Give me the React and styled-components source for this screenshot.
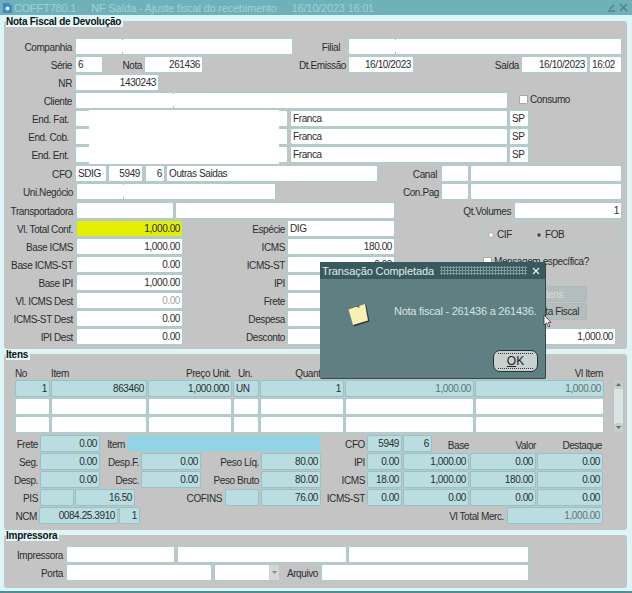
import React from 'react';
import styled, { createGlobalStyle } from 'styled-components';

const Global = createGlobalStyle`
  html, body { margin: 0; padding: 0; background: #dcf5f6; }
  body { font-family: "Liberation Sans", Arial, sans-serif; font-size: 10px; letter-spacing: -0.4px; color: #2a2e2e; }
`;

const Page = styled.div`
  position: relative;
  width: 632px;
  height: 593px;
  overflow: hidden;
  border-bottom: 2px solid #4f8f94;
  box-sizing: border-box;
`;

const TitleBar = styled.div`
  display: flex;
  align-items: center;
  height: 15px;
  padding: 0 4px 0 3px;
  background: #6fb1b9;
  color: #a0d0d5;
  font-size: 11px;
  letter-spacing: -0.2px;
`;
const TitleText = styled.span`
  margin-left: ${p => p.$ml}px;
  white-space: nowrap;
`;
const TitleIcons = styled.div`
  margin-left: auto;
  display: flex;
  align-items: center;
  gap: 3px;
`;

const Section = styled.section`
  position: relative;
  width: 623px;
  height: ${p => p.$h}px;
  margin: ${p => p.$mt}px 0 0 4px;
  padding-top: ${p => p.$pt}px;
  box-sizing: border-box;
  background: #c4c4c4;
  border-radius: 3px;
`;
const Legend = styled.div`
  position: absolute;
  top: -5px;
  left: 2px;
  padding: 0 2px 0 0;
  height: 11px;
  line-height: 11px;
  background: #e2f8f8;
  color: #111;
  font-weight: 700;
  font-size: 10px;
  letter-spacing: -0.25px;
`;

const Row = styled.div`
  display: flex;
  height: 18px;
  margin-top: ${p => p.$mt || 0}px;
`;
const Label = styled.div`
  flex: none;
  box-sizing: border-box;
  width: ${p => p.$w}px;
  height: 17px;
  line-height: ${p => (p.$low ? 22 : 19)}px;
  padding-right: ${p => (p.$pr === undefined ? 3 : p.$pr)}px;
  text-align: right;
  white-space: nowrap;
`;
const fieldBg = { white: '#fff', tint: '#b9dde1', blue: '#93d3e6', yellow: '#e3ee00' };
const Field = styled.div`
  flex: none;
  position: relative;
  box-sizing: border-box;
  width: ${p => (p.$w ? `${p.$w}px` : 'auto')};
  height: 17px;
  margin: ${p => p.$mt || 0}px 0 0 ${p => p.$ml || 0}px;
  padding: 0 2px 0 2px;
  line-height: 16px;
  border: 1px solid ${p => (p.$bg === 'tint' ? '#93c3c7' : '#a7cfd0')};
  border-radius: 2px;
  background: ${p => fieldBg[p.$bg || 'white']};
  color: ${p => (p.$muted ? '#5f7474' : p.$faint ? '#a5a5a5' : 'inherit')};
  text-align: ${p => (p.$right ? 'right' : 'left')};
  white-space: nowrap;
  overflow: hidden;
`;
const Tick = styled.i`
  position: absolute;
  left: ${p => p.$x}px;
  top: -1px;
  bottom: -1px;
  width: 1px;
  background: linear-gradient(#8fc0c0 2px, transparent 2px, transparent 14px, #8fc0c0 14px);
`;

const Check = styled.span`
  flex: none;
  box-sizing: border-box;
  width: 9px;
  height: 9px;
  background: #fff;
  border: 1px solid #a8a8a8;
  border-radius: 1px;
`;
const CheckRow = styled.div`
  display: flex;
  align-items: center;
  gap: 2px;
  height: 9px;
  margin: ${p => p.$mt || 0}px 0 0 ${p => p.$ml}px;
`;

const Columns = styled.div`
  display: flex;
`;
const LeftCol = styled.div`
  width: 391px;
  flex: none;
`;
const RightCol = styled.div`
  width: 232px;
  flex: none;
  display: flex;
  flex-direction: column;
`;
const RadioGroup = styled.div`
  display: flex;
  align-items: center;
  box-sizing: border-box;
  width: 140px;
  height: 29px;
  margin-left: 87px;
  padding-left: 5px;
  border: 1px solid #b4cfd0;
  border-radius: 4px;
`;
const Radio = styled.span`
  width: 6px;
  height: 6px;
  box-sizing: border-box;
  border-radius: 50%;
  margin-right: 3px;
  background: ${p => (p.$on ? '#555' : '#fff')};
  border: 1px solid ${p => (p.$on ? '#ddd' : '#aaa')};
`;
const RadioText = styled.span`
  width: ${p => p.$w}px;
`;
const ActionButton = styled.div`
  box-sizing: border-box;
  width: 117px;
  height: ${p => p.$h}px;
  margin: ${p => p.$mt || 0}px 0 0 75px;
  padding-right: ${p => p.$pr}px;
  line-height: ${p => p.$h - 1}px;
  text-align: right;
  background: #b5bcbc;
  border: 1px solid #a9bcbc;
  border-radius: 2px;
  color: ${p => (p.$off ? '#d6dcdc' : 'inherit')};
`;

const TableWrap = styled.div`
  display: flex;
  margin-left: 11px;
`;
const Table = styled.div`
  display: grid;
  grid-template-columns: 35px 96px 84px 26px 84px 129px 129px;
  grid-template-rows: 11px repeat(3, 17px);
  gap: 1px;
`;
const Head = styled.div`
  grid-column: 1 / -1;
  display: grid;
  grid-template-columns: subgrid;
  line-height: 12px;
`;
const HeadCell = styled.div`
  text-align: ${p => (p.$right ? 'right' : 'left')};
  padding: 0 ${p => (p.$right ? 1 : 0)}px 0 ${p => p.$pl || 0}px;
  white-space: nowrap;
`;
const Scrollbar = styled.div`
  flex: none;
  align-self: flex-end;
  display: flex;
  flex-direction: column;
  justify-content: space-between;
  box-sizing: border-box;
  width: 11px;
  height: 54px;
  margin: 0 0 0 9px;
  background: #dce3e3;
  border: 1px solid #b8c4c4;
  border-radius: 4px;
`;
const ScrollEnd = styled.div`
  height: 9px;
  display: flex;
  align-items: center;
  justify-content: center;
  background: #c4cccc;
  border-radius: 3px;
`;
const DetailBlock = styled.div`
  margin-top: 2px;
`;
const DropArrow = styled.span`
  position: absolute;
  top: 0;
  right: 0;
  bottom: 0;
  width: 10px;
  display: flex;
  align-items: center;
  justify-content: center;
  background: #d6d6d6;
`;

const Dialog = styled.div`
  position: absolute;
  left: 320px;
  top: 262px;
  width: 226px;
  height: 117px;
  background: #5f7f83;
  border-right: 1px solid #2e4a4e;
  border-bottom: 1px solid #2e4a4e;
  border-radius: 2px;
  box-sizing: border-box;
  color: #d6e4e4;
  display: flex;
  flex-direction: column;
`;
const DialogTitle = styled.div`
  display: flex;
  align-items: center;
  height: 17px;
  padding: 0 5px 0 2px;
  background: #38595e;
  color: #e2ecec;
  font-size: 11px;
  letter-spacing: -0.1px;
`;
const Dots = styled.span`
  flex: 1;
  height: 9px;
  margin: 0 5px 0 6px;
  background: radial-gradient(circle at 1.5px 1.5px, #7e9a9d 1px, transparent 1.2px) 0 0 / 3px 3px;
`;
const DialogBody = styled.div`
  flex: 1;
  display: flex;
  align-items: flex-start;
  padding: 24px 0 0 28px;
`;
const Message = styled.div`
  margin: 2px 0 0 24px;
  font-size: 11px;
  letter-spacing: -0.25px;
  white-space: nowrap;
`;
const DialogFoot = styled.div`
  display: flex;
  justify-content: flex-end;
  padding: 0 7px 6px 0;
`;
const OkButton = styled.div`
  position: relative;
  width: 45px;
  height: 22px;
  line-height: 21px;
  text-align: center;
  box-sizing: border-box;
  background: #c9d0d0;
  border: 1px solid #1f3235;
  border-radius: 7px;
  color: #222;
  font-size: 12px;
  letter-spacing: 0;
  &::before {
    content: '';
    position: absolute;
    inset: 2px 4px;
    border-top: 1px dotted #333;
    border-bottom: 1px dotted #333;
  }
  u { text-underline-offset: 1px; }
`;
const Pointer = styled.svg`
  position: absolute;
  left: 543px;
  top: 314px;
`;
const Patch = styled.div`
  position: absolute;
  left: 85px;
  top: 0;
  width: 190px;
  height: 54px;
  background: #fff;
`;
const AddressBlock = styled.div`
  position: relative;
`;

const Address = ({ label }) => (
  <Row>
    <Label $w={71} $pr={6}>{label}</Label>
    <Field $w={213} />
    <Field $ml={2} $w={218}>Franca</Field>
    <Field $ml={1} $w={20}>SP</Field>
  </Row>
);

const Money = ({ label, value, left, right, faint }) => (
  <Row>
    <Label $w={72}>{label}</Label>
    <Field $w={107} $right $faint={faint}>{value}</Field>
    <Label $w={104} $pr={2}>{left}</Label>
    <Field $w={108} $right>{right}</Field>
  </Row>
);

const TaxCells = ({ label, a, b, c, d }) => (
  <>
    <Label $w={46} $pr={2}>{label}</Label>
    <Field $w={35} $bg="tint" $right>{a}</Field>
    <Field $ml={1} $w={66} $bg="tint" $right>{b}</Field>
    <Field $ml={1} $w={66} $bg="tint" $right>{c}</Field>
    <Field $ml={1} $w={66} $bg="tint" $right>{d}</Field>
  </>
);

export default function App() {
  return (
    <Page>
      <Global />
      <TitleBar>
        <svg width="9" height="11" viewBox="0 0 9 11">
          <path d="M0 1h6l3 3v7H0z" fill="#3d86c8" />
          <circle cx="4.500" cy="6.500" r="2" fill="#e6f3fb" />
        </svg>
        <TitleText $ml={2}>COFFT780.1</TitleText>
        <TitleText $ml={15}>NF Saída - Ajuste fiscal do recebimento</TitleText>
        <TitleText $ml={15}>16/10/2023 16:01</TitleText>
        <TitleIcons>
          <svg width="9" height="9" viewBox="0 0 9 9">
            <path d="M1 8h7M3 6l4-4" stroke="#4e8388" strokeWidth="1.5" fill="none" />
          </svg>
          <svg width="9" height="9" viewBox="0 0 9 9">
            <path d="M1 1l7 7M8 1l-7 7" stroke="#4e8388" strokeWidth="1.6" fill="none" />
          </svg>
        </TitleIcons>
      </TitleBar>

      <Section $mt={6} $h={328} $pt={17}>
        <Legend>Nota Fiscal de Devolução</Legend>
        <Row>
          <Label $w={71}>Companhia</Label>
          <Field $w={218}><Tick $x={46} /></Field>
          <Label $w={55} $pr={8}>Filial</Label>
          <Field $w={274}><Tick $x={46} /></Field>
        </Row>
        <Row>
          <Label $w={71}>Série</Label>
          <Field $w={28}>6</Field>
          <Label $w={41} $pr={2}>Nota</Label>
          <Field $w={59} $right>261436</Field>
          <Label $w={145} $pr={2}>Dt.Emissão</Label>
          <Field $w={66} $right>16/10/2023</Field>
          <Label $w={107} $pr={2}>Saída</Label>
          <Field $w={67} $right>16/10/2023</Field>
          <Field $ml={1} $w={33}>16:02</Field>
        </Row>
        <Row>
          <Label $w={71}>NR</Label>
          <Field $w={84} $right>1430243</Field>
        </Row>
        <Row>
          <Label $w={71}>Cliente</Label>
          <Field $w={433}><Tick $x={97} /></Field>
          <CheckRow $ml={11} $mt={3}>
            <Check />
            Consumo
          </CheckRow>
        </Row>
        <AddressBlock>
          <Address label="End. Fat." />
          <Address label="End. Cob." />
          <Address label="End. Ent." />
          <Patch />
        </AddressBlock>
        <Row $mt={1}>
          <Label $w={71}>CFO</Label>
          <Field $w={32}>SDIG</Field>
          <Field $ml={1} $w={35} $right>5949</Field>
          <Field $ml={2} $w={20} $right>6</Field>
          <Field $ml={1} $w={212}>Outras Saidas</Field>
          <Label $w={63} $pr={4}>Canal</Label>
          <Field $w={28} />
          <Field $ml={1} $w={152} />
        </Row>
        <Row>
          <Label $w={72}>Uni.Negócio</Label>
          <Field $w={200}><Tick $x={46} /></Field>
          <Label $w={165} $pr={2}>Con.Pag</Label>
          <Field $w={28} />
          <Field $ml={1} $w={152} />
        </Row>
        <Columns>
          <LeftCol>
            <Row $mt={1}>
              <Label $w={72}>Transportadora</Label>
              <Field $w={98} />
              <Field $ml={1} $w={220} />
            </Row>
            <Row>
              <Label $w={72}>Vl. Total Conf.</Label>
              <Field $w={107} $bg="yellow" $right>1,000.00</Field>
              <Label $w={104} $pr={2}>Espécie</Label>
              <Field $w={108}>DIG</Field>
            </Row>
            <Money label="Base ICMS" value="1,000.00" left="ICMS" right="180.00" />
            <Money label="Base ICMS-ST" value="0.00" left="ICMS-ST" right="0.00" />
            <Money label="Base IPI" value="1,000.00" left="IPI" />
            <Money label="Vl. ICMS Dest" value="0.00" left="Frete" faint />
            <Money label="ICMS-ST Dest" value="0.00" left="Despesa" />
            <Money label="IPI Dest" value="0.00" left="Desconto" />
          </LeftCol>
          <RightCol>
            <Row $mt={1}>
              <Label $w={119}>Qt.Volumes</Label>
              <Field $w={108} $right>1</Field>
            </Row>
            <RadioGroup>
              <Radio />
              <RadioText $w={39}>CIF</RadioText>
              <Radio $on />
              <RadioText $w={30}>FOB</RadioText>
            </RadioGroup>
            <CheckRow $ml={88} $mt={8}>
              <Check />
              Mensagem específica?
            </CheckRow>
            <ActionButton $off $h={16} $mt={20} $pr={23}>Gerar Itens</ActionButton>
            <ActionButton $h={17} $mt={1} $pr={7}>Nota Fiscal</ActionButton>
            <Field $ml={75} $mt={8} $w={146} $right>1,000.00</Field>
          </RightCol>
        </Columns>
      </Section>

      <Section $mt={5} $h={176} $pt={14}>
        <Legend>Itens</Legend>
        <TableWrap>
          <Table>
            <Head>
              <HeadCell>No</HeadCell>
              <HeadCell>Item</HeadCell>
              <HeadCell $right>Preço Unit.</HeadCell>
              <HeadCell $pl={5}>Un.</HeadCell>
              <HeadCell $right>Quantidade</HeadCell>
              <HeadCell $right />
              <HeadCell $right>Vl Item</HeadCell>
            </Head>
            <Field $bg="tint" $right>1</Field>
            <Field $bg="tint" $right>863460</Field>
            <Field $bg="tint" $right>1,000.000</Field>
            <Field $bg="tint">UN</Field>
            <Field $bg="tint" $right>1</Field>
            <Field $bg="tint" $right $muted>1,000.00</Field>
            <Field $bg="tint" $right $muted>1,000.00</Field>
            {Array.from({ length: 14 }, (_, i) => <Field key={i} />)}
          </Table>
          <Scrollbar>
            <ScrollEnd>
              <svg width="5" height="3" viewBox="0 0 5 3"><path d="M2.500 0L5 3H0z" fill="#666" /></svg>
            </ScrollEnd>
            <ScrollEnd>
              <svg width="5" height="3" viewBox="0 0 5 3"><path d="M0 0h5L2.500 3z" fill="#666" /></svg>
            </ScrollEnd>
          </Scrollbar>
        </TableWrap>
        <DetailBlock>
          <Row>
            <Label $w={36} $pr={2}>Frete</Label>
            <Field $w={60} $bg="tint" $right>0.00</Field>
            <Label $w={27} $pr={2}>Item</Label>
            <Field $w={194} $bg="blue" />
            <Label $w={46} $pr={2}>CFO</Label>
            <Field $w={35} $bg="tint" $right>5949</Field>
            <Field $ml={1} $w={29} $bg="tint" $right>6</Field>
            <Label $w={37} $pr={0} $low>Base</Label>
            <Label $w={67} $pr={0} $low>Valor</Label>
            <Label $w={66} $pr={0} $low>Destaque</Label>
          </Row>
          <Row>
            <Label $w={36} $pr={2}>Seg.</Label>
            <Field $w={60} $bg="tint" $right>0.00</Field>
            <Label $w={41} $pr={2}>Desp.F.</Label>
            <Field $w={60} $bg="tint" $right>0.00</Field>
            <Label $w={60} $pr={2}>Peso Líq.</Label>
            <Field $w={60} $bg="tint" $right>80.00</Field>
            <TaxCells label="IPI" a="0.00" b="1,000.00" c="0.00" d="0.00" />
          </Row>
          <Row>
            <Label $w={36} $pr={2}>Desp.</Label>
            <Field $w={60} $bg="tint" $right>0.00</Field>
            <Label $w={41} $pr={2}>Desc.</Label>
            <Field $w={60} $bg="tint" $right>0.00</Field>
            <Label $w={60} $pr={2}>Peso Bruto</Label>
            <Field $w={60} $bg="tint" $right>80.00</Field>
            <TaxCells label="ICMS" a="18.00" b="1,000.00" c="180.00" d="0.00" />
          </Row>
          <Row>
            <Label $w={36} $pr={2}>PIS</Label>
            <Field $w={34} $bg="tint" />
            <Field $ml={1} $w={60} $bg="tint" $right>16.50</Field>
            <Label $w={90} $pr={3}>COFINS</Label>
            <Field $w={34} $bg="tint" />
            <Field $ml={2} $w={60} $bg="tint" $right>76.00</Field>
            <TaxCells label="ICMS-ST" a="0.00" b="0.00" c="0.00" d="0.00" />
          </Row>
          <Row>
            <Label $w={35} $pr={2}>NCM</Label>
            <Field $w={79} $bg="tint" $right>0084.25.3910</Field>
            <Field $ml={1} $w={21} $bg="tint" $right>1</Field>
            <Label $w={367} $pr={3}>Vl Total Merc.</Label>
            <Field $w={96} $bg="tint" $right $muted>1,000.00</Field>
          </Row>
        </DetailBlock>
      </Section>

      <Section $mt={5} $h={53} $pt={11}>
        <Legend>Impressora</Legend>
        <Row>
          <Label $w={62}>Impressora</Label>
          <Field $w={109} />
          <Field $ml={2} $w={170} />
          <Field $ml={1} $w={181} />
        </Row>
        <Row>
          <Label $w={62}>Porta</Label>
          <Field $w={146} />
          <Field $ml={2} $w={66}>
            <DropArrow>
              <svg width="5" height="3" viewBox="0 0 5 3"><path d="M0 0h5L2.500 3z" fill="#888" /></svg>
            </DropArrow>
          </Field>
          <Label $w={41}>Arquivo</Label>
          <Field $w={208} />
        </Row>
      </Section>

      <Dialog>
        <DialogTitle>
          Transação Completada
          <Dots />
          <svg width="8" height="8" viewBox="0 0 8 8">
            <path d="M1 1l6 6M7 1l-6 6" stroke="#e6eeee" strokeWidth="1.3" fill="none" />
          </svg>
        </DialogTitle>
        <DialogBody>
          <svg width="22" height="24" viewBox="0 0 22 24">
            <path d="M1 7L18 1.500 21.500 18.500 6 23.500z" fill="#2d3a30" />
            <path d="M0.500 6.500L17 1 20 17.500 5 22z" fill="#f8efb4" />
            <path d="M8 3.500l3-1 .5 2.500z" fill="#5d5a3c" />
          </svg>
          <Message>Nota fiscal - 261436 a 261436.</Message>
        </DialogBody>
        <DialogFoot>
          <OkButton><u>O</u>K</OkButton>
        </DialogFoot>
      </Dialog>
      <Pointer width="9" height="14" viewBox="0 0 9 14">
        <path d="M1 1v10l2.500-2 2 4 1.500-.8-2-3.900H8z" fill="#fff" stroke="#333" strokeWidth=".8" />
      </Pointer>
    </Page>
  );
}
